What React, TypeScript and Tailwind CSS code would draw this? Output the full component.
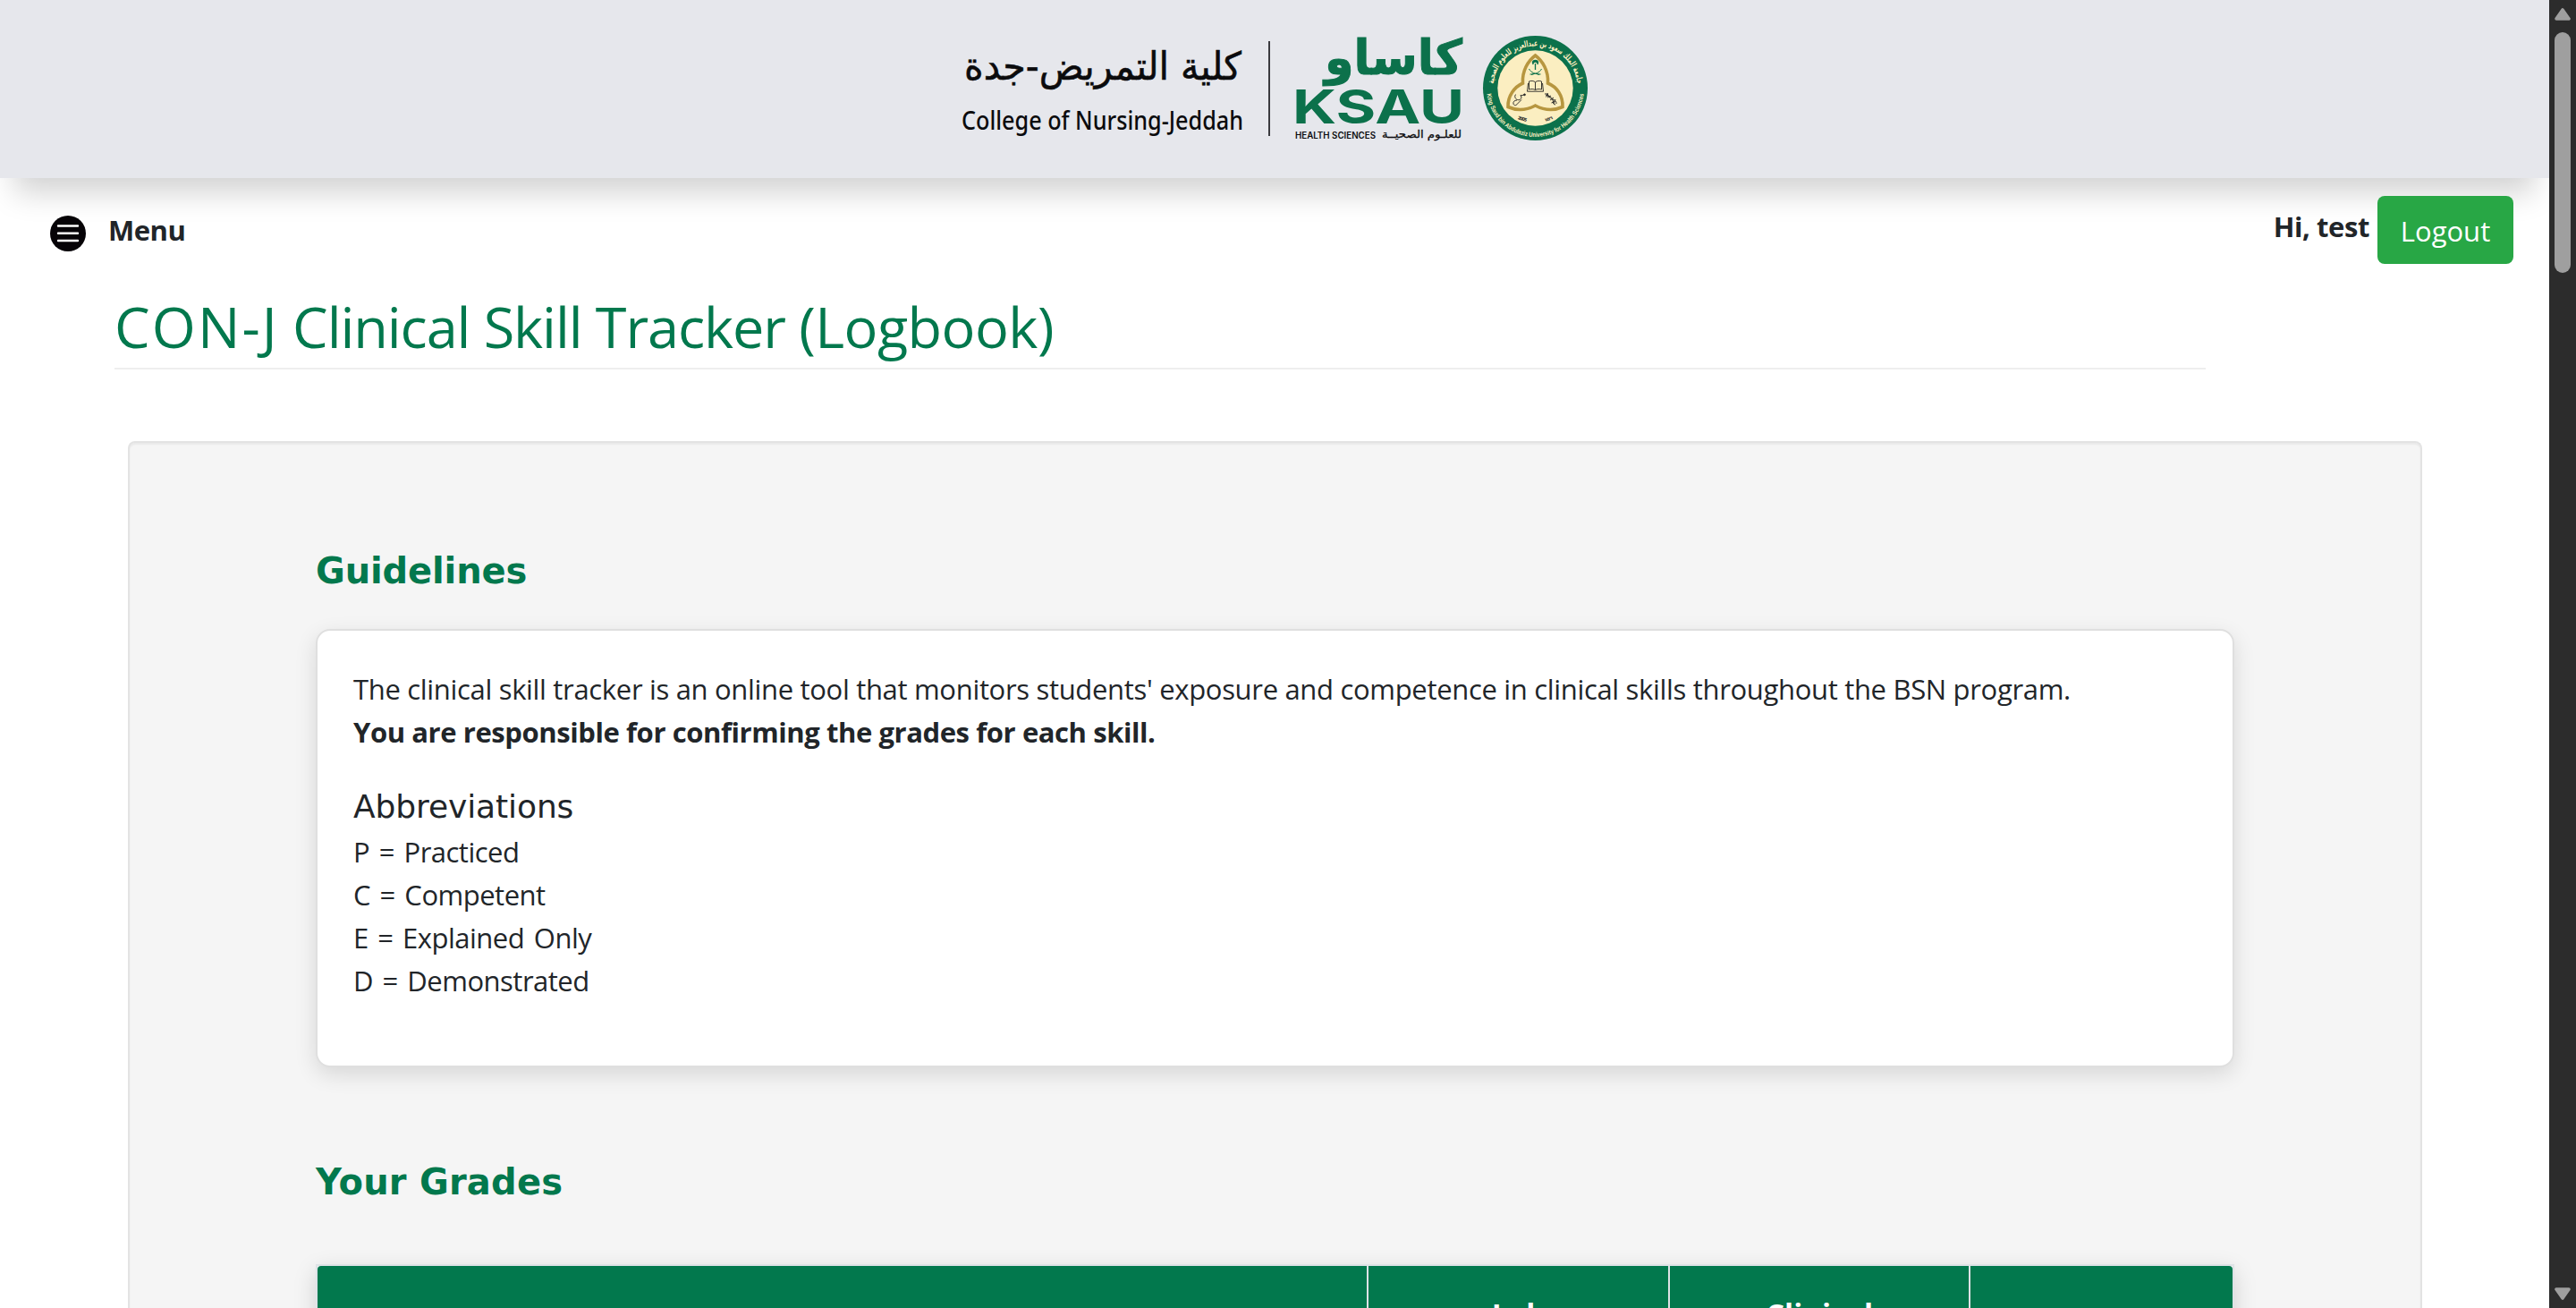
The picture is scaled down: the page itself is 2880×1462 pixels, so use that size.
const abbreviations = ["P = Practiced", "C = Competent", "E = Explained Only", "D = Demonstrated"];

function BrandLogo() {
  return (
    <svg width="710" height="135" viewBox="1070 30 710 135" className="block">
      <g fill="#0b0b0d">
        <text x="1078" y="88.500" direction="ltr" fontFamily="'DejaVu Sans',sans-serif" fontSize="43" stroke="#0b0b0d" strokeWidth="0.600" textLength="310" lengthAdjust="spacingAndGlyphs">كلية التمريض-جدة</text>
        <text x="1075" y="144.500" fontFamily="'Noto Sans','Open Sans',sans-serif" fontSize="28.500" fontWeight="500" textLength="315" lengthAdjust="spacingAndGlyphs">College of Nursing-Jeddah</text>
        <text x="1448" y="154.500" fontFamily="Inter,sans-serif" fontSize="9.800" fontWeight="600" textLength="90" lengthAdjust="spacingAndGlyphs">HEALTH SCIENCES</text>
        <text x="1545" y="153.500" fontFamily="'DejaVu Sans',sans-serif" fontSize="11.500" fontWeight="400" stroke="#0b0b0d" strokeWidth="0.300" textLength="89" lengthAdjust="spacingAndGlyphs">للعلـوم الصحيــة</text>
      </g>
      <rect x="1418" y="46" width="2" height="106" fill="#3a3a3e" />
      <g fill="#0c714b">
        <text x="1481" y="83" fontFamily="'DejaVu Sans',sans-serif" fontSize="54" fontWeight="700" stroke="#0c714b" strokeWidth="1" textLength="154" lengthAdjust="spacingAndGlyphs">كاساو</text>
        <text x="1445" y="138" fontFamily="Inter,sans-serif" fontSize="52.500" fontWeight="700" textLength="192" lengthAdjust="spacingAndGlyphs">KSAU</text>
      </g>
      <g transform="translate(1654 36)">
        <circle cx="62.500" cy="62.500" r="58.500" fill="#0c714b" />
        <circle cx="62.500" cy="62.500" r="42.200" fill="#fbeec1" />
        <path id="ringTop" d="M15.500 62.500a47 47 0 0 1 94 0" fill="none" />
        <path id="ringBottom" d="M8 62.500a54.500 54.500 0 0 0 109 0" fill="none" />
        <text fill="#fbeec1" fontFamily="'DejaVu Sans',sans-serif" fontSize="9.500" fontWeight="700" textAnchor="middle">
          <textPath href="#ringTop" startOffset="50%" textLength="138" lengthAdjust="spacingAndGlyphs">جامعة الملك سعود بن عبدالعزيز للعلوم الصحية</textPath>
        </text>
        <text fill="#fbeec1" fontFamily="'Liberation Sans',sans-serif" fontSize="7.200" fontWeight="700" textAnchor="middle">
          <textPath href="#ringBottom" startOffset="50%" textLength="158" lengthAdjust="spacingAndGlyphs">King Saud bin Abdulaziz University for Health Sciences</textPath>
        </text>
        <path d="M62.500 26c-8 6-15 17-14 31-9 4-17 14-16.500 26.500 10 4.500 21 3.500 30.500-1.500 9.500 5 20.500 6 30.500 1.500C93.500 71 86.500 61 76.500 57c1-14-6-25-14-31z" fill="none" stroke="#b7963f" strokeWidth="3.600" strokeLinejoin="miter" />
        <g stroke="#0c714b" fill="none" strokeWidth="1">
          <path d="M62.500 35v7" strokeWidth="1.300" />
          <path d="M60 36c-1-4 6-4 5 0M59.500 34.500c0-4 6-4 6 0" strokeWidth="1.500" />
          <path d="M55.500 41c2 4 7 6 13 6M69.500 41c-2 4-7 6-13 6M58 47.500l3-1M67 47.500l-3-1" />
        </g>
        <g stroke="#222" fill="none" strokeWidth="0.900">
          <path d="M55.500 55c2.500-1 5-.8 7 .8 2-1.600 4.500-1.800 7-.8v9c-2.500-.8-5-.7-7 .5-2-1.200-4.500-1.300-7-.5zM62.500 56v8.500M54.500 57l-1 9.200h18l-1-9.200" />
          <path d="M41 69.500c-2 1-1.500 4 .5 5.500s5 .5 5.500-2l-1-3M42 76c-3 0-4.500 2-4 4s3 2.500 4.500 0l4.500-4.500M46 71l4-1" />
          <circle cx="50.500" cy="69.800" r="0.900" fill="#222" />
          <path d="M73 69c5-1 5 5 8 6s5 1 5 5M76 68c0 5 5 4 6 7s-1 5 3 6M74 70l3 1.500M76 73l4-2M79 76l4-3M80.500 79l4-2M74.500 72.500l2-4M83 80l2-5" />
        </g>
        <g fill="#222" fontFamily="'DejaVu Sans',sans-serif" fontSize="5" fontWeight="700" textAnchor="middle">
          <text transform="translate(47.500 98.500) rotate(17)" textLength="10.500">2005</text>
          <text transform="translate(78 98.500) rotate(-19)" textLength="9.500">١٤٢٦</text>
        </g>
      </g>
    </svg>
  );
}

function MenuIcon() {
  return (
    <svg width="40" height="40" viewBox="0 0 40 40" className="block">
      <circle cx="20" cy="20" r="20" fill="#060307" />
      <path d="M9 11.500h22M9 19.800h22M9 28h22" stroke="#fff" strokeWidth="2.400" strokeLinecap="round" />
    </svg>
  );
}

function ScrollArrow({ down = false }: { down?: boolean }) {
  return (
    <svg width="18" height="14" viewBox="0 0 18 14" className={down ? "block rotate-180" : "block"}>
      <path d="M9 2L16 12H2z" fill="#9f9f9f" stroke="#9f9f9f" strokeWidth="3.600" strokeLinejoin="round" />
    </svg>
  );
}

export default function App() {
  return (
    <div className="flex h-[1462px] w-[2880px] overflow-hidden bg-white font-['Open_Sans',sans-serif] text-[31px] leading-[48px] text-[#212529]">
      <div className="flex h-full w-[2850px] flex-col overflow-hidden">
        <header className="h-[199px] shrink-0 bg-[#e6e7ec] pl-[1070px] pt-[30px] shadow-[0_32px_32px_-16px_rgba(0,0,0,0.18)]">
          <BrandLogo />
        </header>

        <div className="flex h-[118px] shrink-0 items-start justify-between pl-[56px] pr-[40px] pt-5">
          <div className="flex items-start gap-[25px] pt-[14px] font-bold tracking-[-0.5px]">
            <div className="pt-2"><MenuIcon /></div>
            <span>Menu</span>
          </div>
          <div className="flex gap-[9px]">
            <span className="pt-[10px] font-bold tracking-[-0.43px]">Hi, test</span>
            <button className="h-[76px] w-[152px] rounded-lg bg-[#28a745] pt-[2px] text-white">Logout</button>
          </div>
        </div>

        <h1 className="ml-[128px] h-[96px] w-[2338px] shrink-0 border-b-2 border-[#eee] pt-px text-[63px] leading-[94px] tracking-[-0.54px] text-[#02784d]">
          <span className="tracking-[2.1px]">CON-J</span>
          <span className="tracking-[-1.1px]"> Clinical Skill Tracker </span>
          (Logbook)
        </h1>

        <section className="ml-[143px] mt-[80px] w-[2565px] flex-1 shrink-0 rounded-t-lg border-2 border-b-0 border-[#e3e3e3] bg-[#f5f5f5] px-[208px] shadow-[inset_0_2px_2px_rgba(0,0,0,0.05)]">
          <h2 className="mt-[119px] font-['DejaVu_Sans',sans-serif] text-[40px] font-bold leading-[48px] tracking-[-0.15px] text-[#02784d]">Guidelines</h2>
          <div className="mt-[41px] h-[490px] w-[2145px] rounded-2xl border-2 border-[#dfdfdf] bg-white px-[40px] pt-[41px] shadow-[0_8px_24px_rgba(0,0,0,0.12)]">
            <p className="tracking-[-0.32px]">The clinical skill tracker is an online tool that monitors students' exposure and competence in clinical skills throughout the BSN program.</p>
            <p className="font-bold tracking-[-0.42px]">You are responsible for confirming the grades for each skill.</p>
            <h3 className="mt-[34px] font-['DejaVu_Sans',sans-serif] text-[36px] leading-[52px] tracking-[-0.1px]">Abbreviations</h3>
            {abbreviations.map((a) => (
              <p key={a} className="tracking-[-0.5px] [word-spacing:3px]">{a}</p>
            ))}
          </div>
          <h2 className="mt-[104px] font-['DejaVu_Sans',sans-serif] text-[40px] font-bold leading-[48px] tracking-[0.2px] text-[#02784d]">Your Grades</h2>
          <div className="mt-[68px] w-[2145px] border-2 border-[#dee2e6] shadow-[0_8px_24px_rgba(0,0,0,0.15)]">
            <div className="grid h-[120px] grid-cols-[1173px_337px_336px_295px] overflow-hidden rounded-t bg-[#02784d] text-center text-[33px] font-bold text-white *:pt-[30px]">
              <span />
              <span className="border-l-2 border-[#dee2e6]">Lab</span>
              <span className="border-l-2 border-[#dee2e6]">Clinical</span>
              <span className="border-l-2 border-[#dee2e6]" />
            </div>
          </div>
        </section>
      </div>

      <aside className="flex h-full w-[30px] flex-col items-center bg-[#2c2c2c] pb-[9px] pt-[9px]">
        <ScrollArrow />
        <div className="mt-[13px] h-[269px] w-[18px] rounded-full bg-[#9f9f9f]" />
        <div className="flex-1" />
        <ScrollArrow down />
      </aside>
    </div>
  );
}
